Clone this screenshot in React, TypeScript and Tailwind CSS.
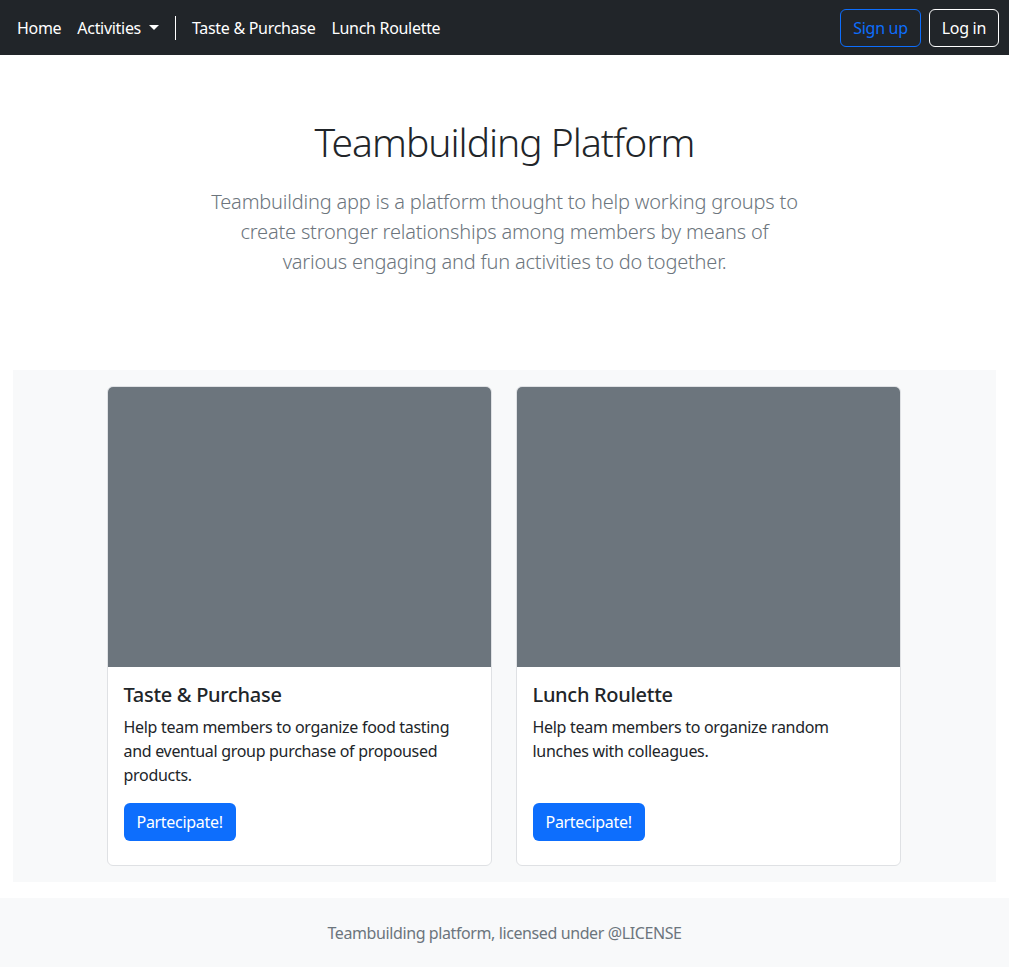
import React from "react";

const activities = [
  {
    title: "Taste & Purchase",
    text: "Help team members to organize food tasting and eventual group purchase of propoused products.",
  },
  {
    title: "Lunch Roulette",
    text: "Help team members to organize random lunches with colleagues.",
  },
];

export default function App() {
  return (
    <div className="min-h-[967px] bg-white text-[#212529] font-['Noto_Sans',sans-serif] tracking-[-0.3px]">
      {/* Navbar */}
      <nav className="h-[55px] bg-[#212529] flex items-center justify-between pl-[17px] pr-[10px]">
        <div className="flex items-center text-white text-base">
          <a className="mr-[16px]">Home</a>
          <a className="flex items-center">
            Activities
            <span className="ml-[8px] w-0 h-0 border-l-[5px] border-r-[5px] border-t-[5px] border-l-transparent border-r-transparent border-t-white" />
          </a>
          <span className="mx-[16px] w-px h-[24px] bg-white" />
          <a className="mr-[16px]">Taste &amp; Purchase</a>
          <a>Lunch Roulette</a>
        </div>
        <div className="flex items-center gap-[8px]">
          <button className="h-[38px] px-[12px] rounded-[6px] border border-[#0d6efd] text-[#0d6efd] text-base">
            Sign up
          </button>
          <button className="h-[38px] px-[12px] rounded-[6px] border border-white text-white text-base">
            Log in
          </button>
        </div>
      </nav>

      {/* Hero */}
      <section className="pt-[63px] pb-[93px] text-center">
        <h1 className="text-[39px] leading-[48px] font-light tracking-[-1px]">Teambuilding Platform</h1>
        <p className="mt-[21px] mx-auto max-w-[592px] text-[20px] leading-[30px] font-light text-[#6c757d] tracking-[-0.2px]">
          Teambuilding app is a platform thought to help working groups to create stronger relationships among members by means of various engaging and fun activities to do together.
        </p>
      </section>

      {/* Activities */}
      <section className="mx-[13px] bg-[#f8f9fa] py-[16px]">
        <div className="flex justify-center gap-[24px] pr-[2px]">
          {activities.map((a) => (
            <div key={a.title} className="w-[385px] bg-white border border-[#dfe1e4] rounded-[6px] overflow-hidden flex flex-col">
              <div className="h-[280px] bg-[#6c757d]" />
              <div className="p-[16px] pb-[24px] flex flex-col flex-1">
                <h5 className="text-[20px] leading-[24px] font-medium mb-[8px]">{a.title}</h5>
                <p className="text-base leading-[24px] h-[72px]">{a.text}</p>
                <div className="mt-[16px]">
                  <button className="h-[38px] px-[13px] rounded-[6px] bg-[#0d6efd] text-white text-base">
                    Partecipate!
                  </button>
                </div>
              </div>
            </div>
          ))}
        </div>
      </section>

      {/* Footer */}
      <footer className="mt-[16px] h-[69px] bg-[#f8f9fa] flex items-center justify-center text-base text-[#6c757d] tracking-[-0.4px]">
        Teambuilding platform, licensed under @LICENSE
      </footer>
    </div>
  );
}
